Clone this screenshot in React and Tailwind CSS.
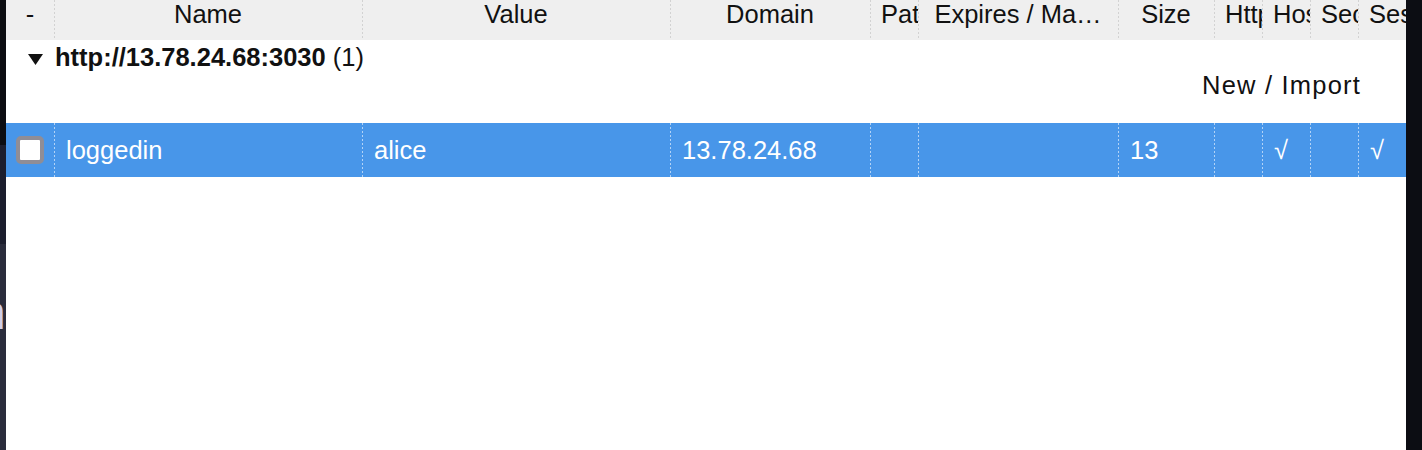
const COLUMNS = [
  { key: 'sel', label: '-', width: 'w-[48px]', align: 'center' },
  { key: 'name', label: 'Name', width: 'w-[308px]', align: 'center' },
  { key: 'value', label: 'Value', width: 'w-[308px]', align: 'center' },
  { key: 'domain', label: 'Domain', width: 'w-[200px]', align: 'center' },
  { key: 'path', label: 'Path', width: 'w-[48px]', align: 'left' },
  { key: 'expires', label: 'Expires / Ma…', width: 'w-[200px]', align: 'center' },
  { key: 'size', label: 'Size', width: 'w-[96px]', align: 'center' },
  { key: 'http', label: 'HttpOnly', width: 'w-[48px]', align: 'left' },
  { key: 'host', label: 'HostOnly', width: 'w-[48px]', align: 'left' },
  { key: 'secure', label: 'Secure', width: 'w-[48px]', align: 'left' },
  { key: 'session', label: 'Session', width: 'w-[48px]', align: 'left' },
]

const ROW = {
  name: 'loggedin',
  value: 'alice',
  domain: '13.78.24.68',
  path: '',
  expires: '',
  size: '13',
  http: '',
  host: '√',
  secure: '',
  session: '√',
}

function Sep({ light }) {
  return (
    <div
      className={[
        'w-px shrink-0 self-stretch bg-[length:1px_4px]',
        light
          ? 'bg-[linear-gradient(to_bottom,#b3d3f6_50%,transparent_50%)]'
          : 'bg-[linear-gradient(to_bottom,#d2d2d2_50%,transparent_50%)]',
      ].join(' ')}
    />
  )
}

function Checkbox() {
  return <div className="h-[28px] w-[28px] rounded-[5px] border-4 border-[#8f8d96] bg-white" />
}

export default function App() {
  return (
    <div className="flex h-[450px] w-[1422px] overflow-hidden bg-white font-['Liberation_Sans',Arial,sans-serif] text-[25.5px] leading-[28px] text-[#111]">
      {/* left edge of the window behind */}
      <div className="flex w-[6px] shrink-0 flex-col overflow-hidden">
        <div className="h-[145px] bg-[#0c0d12]" />
        <div className="h-[99px] bg-[#1c1e2e]" />
        <div className="flex-1 bg-[#2a2c3c] pt-[45px]">
          <span className="-ml-[21px] block text-[48px] leading-[48px] text-[#cfcde6]">n</span>
        </div>
      </div>

      <div className="flex w-[1400px] shrink-0 flex-col">
        {/* header */}
        <div className="flex h-[40px] bg-[#efefef]">
          {COLUMNS.map((col, i) => (
            <div key={col.key} className="flex">
              {i > 0 && <Sep />}
              <div
                className={[
                  'overflow-hidden whitespace-nowrap',
                  i > 0 ? 'px-[11px]' : '',
                  col.align === 'center' ? 'text-center' : 'text-left',
                  col.width,
                  i > 0 ? '-ml-px' : '',
                ].join(' ')}
              >
                {col.label}
              </div>
            </div>
          ))}
        </div>

        {/* group */}
        <div className="flex h-[83px] flex-col pt-[3px]">
          <div className="flex items-center">
            <svg width="15" height="11" viewBox="0 0 15 11" className="ml-[22px] mr-[12px] mt-[4px]">
              <path d="M0 0 L15 0 L7.5 11 Z" fill="#111" />
            </svg>
            <span className="font-bold">http://13.78.24.68:3030</span>
            <span className="ml-[7px]">(1)</span>
          </div>
          <div className="pr-[45px] text-right tracking-[1.2px]">New / Import</div>
        </div>

        {/* selected cookie row */}
        <div className="flex h-[54px] bg-[#4896e9] text-white">
          {COLUMNS.map((col, i) => (
            <div key={col.key} className="flex">
              {i > 0 && <Sep light />}
              <div
                className={[
                  'flex items-center overflow-hidden whitespace-nowrap',
                  col.width,
                  i > 0 ? '-ml-px pl-[12px]' : 'justify-center',
                ].join(' ')}
              >
                {i === 0 ? <Checkbox /> : ROW[col.key]}
              </div>
            </div>
          ))}
          <Sep light />
        </div>

        <div className="flex-1 bg-white" />
      </div>

      {/* right edge */}
      <div className="w-[16px] shrink-0 bg-[#0c0d13]" />
    </div>
  )
}
